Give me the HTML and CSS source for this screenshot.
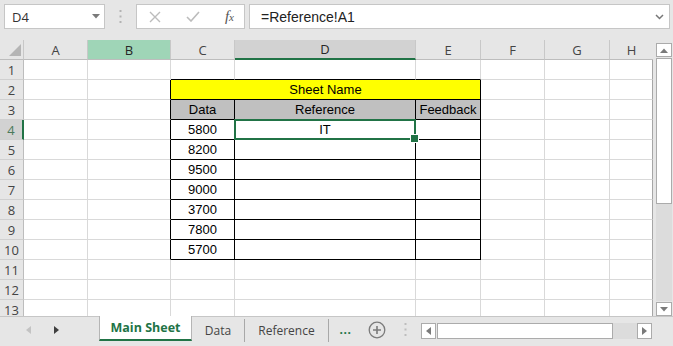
FILE: index.html
```html
<!DOCTYPE html>
<html lang="en">
<head>
	<meta charset="UTF-8">
	<title>Main Sheet</title>
	<link rel="stylesheet" href="styles.css">
</head>
<body>
	<div class="app">
		<!-- formula bar -->
		<div class="fbar">
			<div class="namebox">
				<span>D4</span>
				<svg class="caret" width="8" height="5" viewBox="0 0 8 5"><path d="M0 0h8L4 4.5z" fill="#7a7a7a"/></svg>
			</div>
			<div class="fsep">
				<svg width="3" height="13" viewBox="0 0 3 13"><rect x="0.5" y="0" width="2" height="2" fill="#b3b3b3"/><rect x="0.5" y="5.5" width="2" height="2" fill="#b3b3b3"/><rect x="0.5" y="11" width="2" height="2" fill="#b3b3b3"/></svg>
			</div>
			<div class="fxbox">
				<svg width="12" height="12" viewBox="0 0 12 12"><path d="M1 1l10 10M11 1L1 11" stroke="#bcbcbc" stroke-width="1.4" fill="none"/></svg>
				<svg width="14" height="11" viewBox="0 0 14 11"><path d="M1 6l4 4L13 1" stroke="#bcbcbc" stroke-width="1.6" fill="none"/></svg>
				<span class="fx">f<small>x</small></span>
			</div>
			<div class="finput">
				<span>=Reference!A1</span>
				<svg class="chev" width="9" height="6" viewBox="0 0 9 6"><path d="M1 1l3.5 3.5L8 1" stroke="#777" stroke-width="1.5" fill="none"/></svg>
			</div>
		</div>

		<div class="work">
			<div class="sheet">
				<!-- column headers -->
				<div class="corner">
					<svg width="12" height="12" viewBox="0 0 12 12"><path d="M12 0v12H0z" fill="#b5b5b5"/></svg>
				</div>
				<div class="ch">A</div>
				<div class="ch hover">B</div>
				<div class="ch">C</div>
				<div class="ch cur">D</div>
				<div class="ch">E</div>
				<div class="ch">F</div>
				<div class="ch">G</div>
				<div class="ch last">H</div>

				<div class="rh">1</div>
				<div class="c"></div><div class="c"></div><div class="c tt"></div><div class="c tt"></div><div class="c tt"></div><div class="c"></div><div class="c"></div><div class="c last"></div>

				<div class="rh">2</div>
				<div class="c"></div><div class="c tl"></div><div class="c t title">Sheet Name</div><div class="c"></div><div class="c"></div><div class="c last"></div>

				<div class="rh">3</div>
				<div class="c"></div><div class="c tl"></div><div class="c t hd">Data</div><div class="c t hd">Reference</div><div class="c t hd">Feedback</div><div class="c"></div><div class="c"></div><div class="c last"></div>

				<div class="rh cur">4</div>
				<div class="c"></div><div class="c tl"></div><div class="c t">5800</div><div class="c t active">IT</div><div class="c t"></div><div class="c"></div><div class="c"></div><div class="c last"></div>

				<div class="rh">5</div>
				<div class="c"></div><div class="c tl"></div><div class="c t">8200</div><div class="c t"></div><div class="c t"></div><div class="c"></div><div class="c"></div><div class="c last"></div>

				<div class="rh">6</div>
				<div class="c"></div><div class="c tl"></div><div class="c t">9500</div><div class="c t"></div><div class="c t"></div><div class="c"></div><div class="c"></div><div class="c last"></div>

				<div class="rh">7</div>
				<div class="c"></div><div class="c tl"></div><div class="c t">9000</div><div class="c t"></div><div class="c t"></div><div class="c"></div><div class="c"></div><div class="c last"></div>

				<div class="rh">8</div>
				<div class="c"></div><div class="c tl"></div><div class="c t">3700</div><div class="c t"></div><div class="c t"></div><div class="c"></div><div class="c"></div><div class="c last"></div>

				<div class="rh">9</div>
				<div class="c"></div><div class="c tl"></div><div class="c t">7800</div><div class="c t"></div><div class="c t"></div><div class="c"></div><div class="c"></div><div class="c last"></div>

				<div class="rh">10</div>
				<div class="c"></div><div class="c tl"></div><div class="c t">5700</div><div class="c t"></div><div class="c t"></div><div class="c"></div><div class="c"></div><div class="c last"></div>

				<div class="rh">11</div>
				<div class="c"></div><div class="c"></div><div class="c"></div><div class="c"></div><div class="c"></div><div class="c"></div><div class="c"></div><div class="c last"></div>

				<div class="rh">12</div>
				<div class="c"></div><div class="c"></div><div class="c"></div><div class="c"></div><div class="c"></div><div class="c"></div><div class="c"></div><div class="c last"></div>

				<div class="rh">13</div>
				<div class="c"></div><div class="c"></div><div class="c"></div><div class="c"></div><div class="c"></div><div class="c"></div><div class="c"></div><div class="c last"></div>
			</div>

			<div class="vscroll">
				<div class="sbtn"><svg width="8" height="5" viewBox="0 0 8 5"><path d="M0 5h8L4 0.5z" fill="#7a7a7a"/></svg></div>
				<div class="vtrack"><div class="vthumb"></div></div>
				<div class="sbtn"><svg width="8" height="5" viewBox="0 0 8 5"><path d="M0 0h8L4 4.5z" fill="#7a7a7a"/></svg></div>
			</div>
		</div>

		<!-- sheet tabs -->
		<div class="tabbar">
			<div class="tabnav">
				<svg width="5" height="8" viewBox="0 0 5 8"><path d="M5 0v8L0 4z" fill="#c3c3c3"/></svg>
				<svg width="5" height="8" viewBox="0 0 5 8"><path d="M0 0v8l5-4z" fill="#3f3f3f"/></svg>
			</div>
			<div class="tab active">Main Sheet</div>
			<div class="tab">Data</div>
			<div class="tab">Reference</div>
			<div class="more">...</div>
			<div class="addsheet">
				<svg width="18" height="18" viewBox="0 0 18 18"><circle cx="9" cy="9" r="7.8" stroke="#7b7b7b" stroke-width="1.3" fill="none"/><path d="M9 5v8M5 9h8" stroke="#7b7b7b" stroke-width="1.6"/></svg>
			</div>
			<div class="tsep">
				<svg width="3" height="13" viewBox="0 0 3 13"><rect x="0.5" y="0" width="2" height="2" fill="#bdbdbd"/><rect x="0.5" y="5.5" width="2" height="2" fill="#bdbdbd"/><rect x="0.5" y="11" width="2" height="2" fill="#bdbdbd"/></svg>
			</div>
			<div class="hscroll">
				<div class="sbtn"><svg width="5" height="8" viewBox="0 0 5 8"><path d="M5 0v8L0 4z" fill="#7a7a7a"/></svg></div>
				<div class="hthumb"></div>
				<div class="htrack"></div>
				<div class="sbtn"><svg width="5" height="8" viewBox="0 0 5 8"><path d="M0 0v8l5-4z" fill="#7a7a7a"/></svg></div>
			</div>
		</div>
	</div>
</body>
</html>
```

FILE: styles.css
```css
* {
	box-sizing: border-box;
	margin: 0;
	padding: 0;
}

body {
	background: #e6e6e6;
	font-family: "Open Sans", "Noto Sans", sans-serif;
	color: #333;
}

.app {
	width: 673px;
	height: 346px;
	display: flex;
	flex-direction: column;
	overflow: hidden;
}

/* formula bar */
.fbar {
	height: 40px;
	display: flex;
	align-items: flex-start;
	padding: 4px 3px 0 4px;
}

.namebox,
.fxbox,
.finput {
	height: 25px;
	background: #fff;
	border: 1px solid #c6c6c6;
	display: flex;
	align-items: center;
}

.namebox {
	width: 101px;
	padding: 0 4px 0 7px;
	font-size: 13px;
	justify-content: space-between;
}

.fsep {
	width: 31px;
	height: 25px;
	display: flex;
	align-items: center;
	justify-content: center;
}

.fxbox {
	width: 109px;
	padding: 0 10px 0 12px;
	justify-content: space-between;
}

.fx {
	font-family: "Liberation Serif", serif;
	font-style: italic;
	font-size: 15px;
	color: #555;
}

.fx small {
	font-size: 11px;
}

.finput {
	flex: 1;
	margin-left: 4px;
	padding: 0 5px 0 11px;
	justify-content: space-between;
	font-family: "Liberation Sans", Arial, sans-serif;
	font-size: 14px;
	color: #222;
}

/* grid */
.work {
	height: 276px;
	display: flex;
}

.sheet {
	width: 653px;
	display: grid;
	grid-template-columns: 24px 64px 83px 64px 181px 65px 64px 65px 43px;
	grid-auto-rows: 20px;
	overflow: hidden;
	align-content: start;
}

.corner,
.ch,
.rh {
	background: #e6e6e6;
	border-right: 1px solid #c8c8c8;
	border-bottom: 1px solid #bdbdbd;
	display: flex;
	align-items: center;
	justify-content: center;
	font-size: 13px;
	color: #444;
}

.corner {
	align-items: flex-end;
	justify-content: flex-end;
	padding: 0 2px 3px 0;
}

.ch.hover {
	background: #9fd5b7;
	color: #262626;
}

.ch.cur {
	background: #d2d2d2;
	border-bottom: 2px solid #217346;
	color: #262626;
}

.ch.last {
	border-right: none;
}

.rh {
	border-bottom-color: #d0d0d0;
	border-right-color: #bdbdbd;
}

.rh.cur {
	background: #d2d2d2;
	border-right: 2px solid #217346;
	color: #4b7a5b;
}

.c {
	background: #fff;
	border-right: 1px solid #d9d9d9;
	border-bottom: 1px solid #d9d9d9;
	font-family: "Liberation Sans", Arial, sans-serif;
	font-size: 13px;
	color: #000;
	text-align: center;
	line-height: 19px;
	white-space: nowrap;
}

.c.last {
	border-right: 1px solid #a6a6a6;
}

.c.tt {
	border-bottom-color: #000;
}

.c.tl {
	border-right-color: #000;
}

.c.t {
	border-right-color: #000;
	border-bottom-color: #000;
}

.c.title {
	grid-column: span 3;
	background: #ffff00;
}

.c.hd {
	background: #c0c0c0;
}

.c.active {
	position: relative;
	z-index: 2;
}

.c.active::before {
	content: "";
	position: absolute;
	top: -1px;
	left: -1px;
	right: -1px;
	bottom: -1px;
	border: 2px solid #217346;
}

.c.active::after {
	content: "";
	position: absolute;
	right: -4px;
	bottom: -4px;
	width: 7px;
	height: 7px;
	background: #217346;
	border: 1px solid #fff;
}

/* scrollbars */
.sbtn {
	width: 16px;
	height: 14px;
	background: #fff;
	border: 1px solid #ababab;
	display: flex;
	align-items: center;
	justify-content: center;
	flex-shrink: 0;
}

.vscroll {
	width: 20px;
	padding: 3px 1px 0 3px;
	display: flex;
	flex-direction: column;
}

.vtrack {
	flex: 1;
	background: #dcdcdc;
	margin: 1px 0;
}

.vthumb {
	height: 146px;
	background: #fff;
	border: 1px solid #ababab;
}

/* sheet tabs */
.tabbar {
	height: 30px;
	border-top: 1px solid #c6c6c6;
	display: flex;
	align-items: flex-start;
	font-size: 12px;
	color: #444;
}

.tabnav {
	width: 99px;
	height: 25px;
	display: flex;
	align-items: center;
	gap: 23px;
	padding-left: 26px;
}

.tab {
	height: 23px;
	margin-top: 2px;
	display: flex;
	align-items: center;
	justify-content: center;
	border-right: 1px solid #a8a8a8;
}

.tab:nth-child(3) {
	width: 53px;
}

.tab:nth-child(4) {
	width: 84px;
}

.tab.active {
	width: 93px;
	height: 25px;
	margin-top: -1px;
	background: #fff;
	border-left: 1px solid #b5b5b5;
	border-right: 1px solid #b5b5b5;
	border-bottom: 2px solid #217346;
	font-weight: bold;
	font-size: 12.5px;
	color: #217346;
}

.more {
	width: 33px;
	height: 25px;
	display: flex;
	align-items: center;
	justify-content: center;
	color: #217346;
	font-weight: bold;
	letter-spacing: 0.5px;
}

.addsheet {
	width: 30px;
	height: 25px;
	display: flex;
	align-items: center;
	justify-content: center;
}

.tsep {
	width: 26px;
	height: 25px;
	display: flex;
	align-items: center;
	justify-content: center;
}

.hscroll {
	width: 231px;
	margin: 6px 0 0 3px;
	height: 16px;
	display: flex;
}

.hscroll .sbtn {
	width: 15px;
	height: 16px;
}

.hthumb {
	width: 176px;
	margin-left: 1px;
	background: #fff;
	border: 1px solid #ababab;
}

.htrack {
	flex: 1;
	background: #dcdcdc;
}
```
